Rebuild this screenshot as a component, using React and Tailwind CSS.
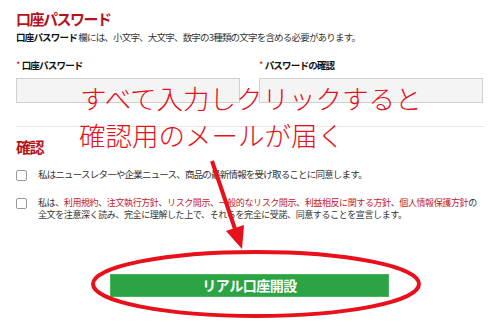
import React from 'react'

const links = ['利用規約', '注文執行方針', 'リスク開示', '一般的なリスク開示', '利益相反に関する方針', '個人情報保護方針']

function Checkbox() {
  return <div className="w-[11px] h-[11px] shrink-0 rounded-[2px] border border-[#9a9a9a] bg-white" />
}

export default function App() {
  return (
    <div className="relative w-[500px] h-[326px] overflow-hidden bg-white text-[#333] font-['Noto_Sans_CJK_JP',sans-serif]">
      <div className="px-4 pt-[10px]">
        <h2 className="text-[15px] leading-[18px] font-bold tracking-[-1.5px] text-[#b5121b]">口座パスワード</h2>
        <p className="mt-[3px] text-[9.5px] leading-[13px] tracking-[-0.8px]">
          <span className="font-bold text-[#111]">口座パスワード</span> 欄には、小文字、大文字、数字の3種類の文字を含める必要があります。
        </p>

        <div className="mt-[14px] grid grid-cols-[224px_224px] gap-x-[19px]">
          {['口座パスワード', 'パスワードの確認'].map((label, i) => (
            <div key={i} className="flex flex-col">
              <label className="text-[9.5px] leading-[14px] font-bold tracking-[-0.8px] text-[#111]">
                <span className="text-[#c4202c] font-normal mr-[2px]">*</span>{label}
              </label>
              <div className="mt-[6px] h-[25px] border border-[#cfcfcf] bg-[#f4f4f4]" />
            </div>
          ))}
        </div>

        <div className="mt-[23px] border-t border-[#e8e8e8]" />

        <h2 className="mt-[11px] text-[15px] leading-[18px] font-bold tracking-[-1.5px] text-[#b5121b]">確認</h2>

        <div className="mt-[14px] flex items-start gap-[11px] h-[13px]">
          <Checkbox />
          <p className="-mt-[2px] text-[9.5px] leading-[12px] tracking-[-0.8px]">私はニュースレターや企業ニュース、商品の最新情報を受け取ることに同意します。</p>
        </div>

        <div className="mt-[15px] flex items-start gap-[11px]">
          <Checkbox />
          <div className="-mt-[1px] text-[9px] leading-[12px] tracking-[-0.4px] whitespace-nowrap">
            <p>
              私は、{links.map((l, i) => (
                <React.Fragment key={i}>
                  <span className="text-[#c4202c]">{l}</span>{i < links.length - 1 ? '、' : 'の'}
                </React.Fragment>
              ))}
            </p>
            <p>全文を注意深く読み、完全に理解した上で、それらを完全に受諾、同意することを宣言します。</p>
          </div>
        </div>

        <button className="ml-[94px] mt-[53px] flex h-[23px] w-[279px] items-center justify-center border border-[#49b35c] bg-[#2ca444] text-[14px] font-bold tracking-[-0.5px] text-white">
          リアル口座開設
        </button>
      </div>

      {/* annotation overlay */}
      <div className="absolute left-[80px] top-[84px] text-[26.5px] leading-[28px] font-light text-[#e3121b] whitespace-nowrap">
        すべて入力しクリックすると
      </div>
      <div className="absolute left-[79px] top-[121px] text-[26.5px] leading-[28px] font-light text-[#e3121b] whitespace-nowrap">
        確認用のメールが届く
      </div>
      <svg className="absolute left-0 top-0" width="500" height="326" viewBox="0 0 500 326">
        <line x1="212" y1="161" x2="236" y2="232" stroke="#e8101a" strokeWidth="4" />
        <polygon points="242,249 226,231 244,225" fill="#e8101a" />
        <ellipse cx="256" cy="284" rx="163" ry="32" fill="none" stroke="#e8101a" strokeWidth="4" />
      </svg>
    </div>
  )
}
